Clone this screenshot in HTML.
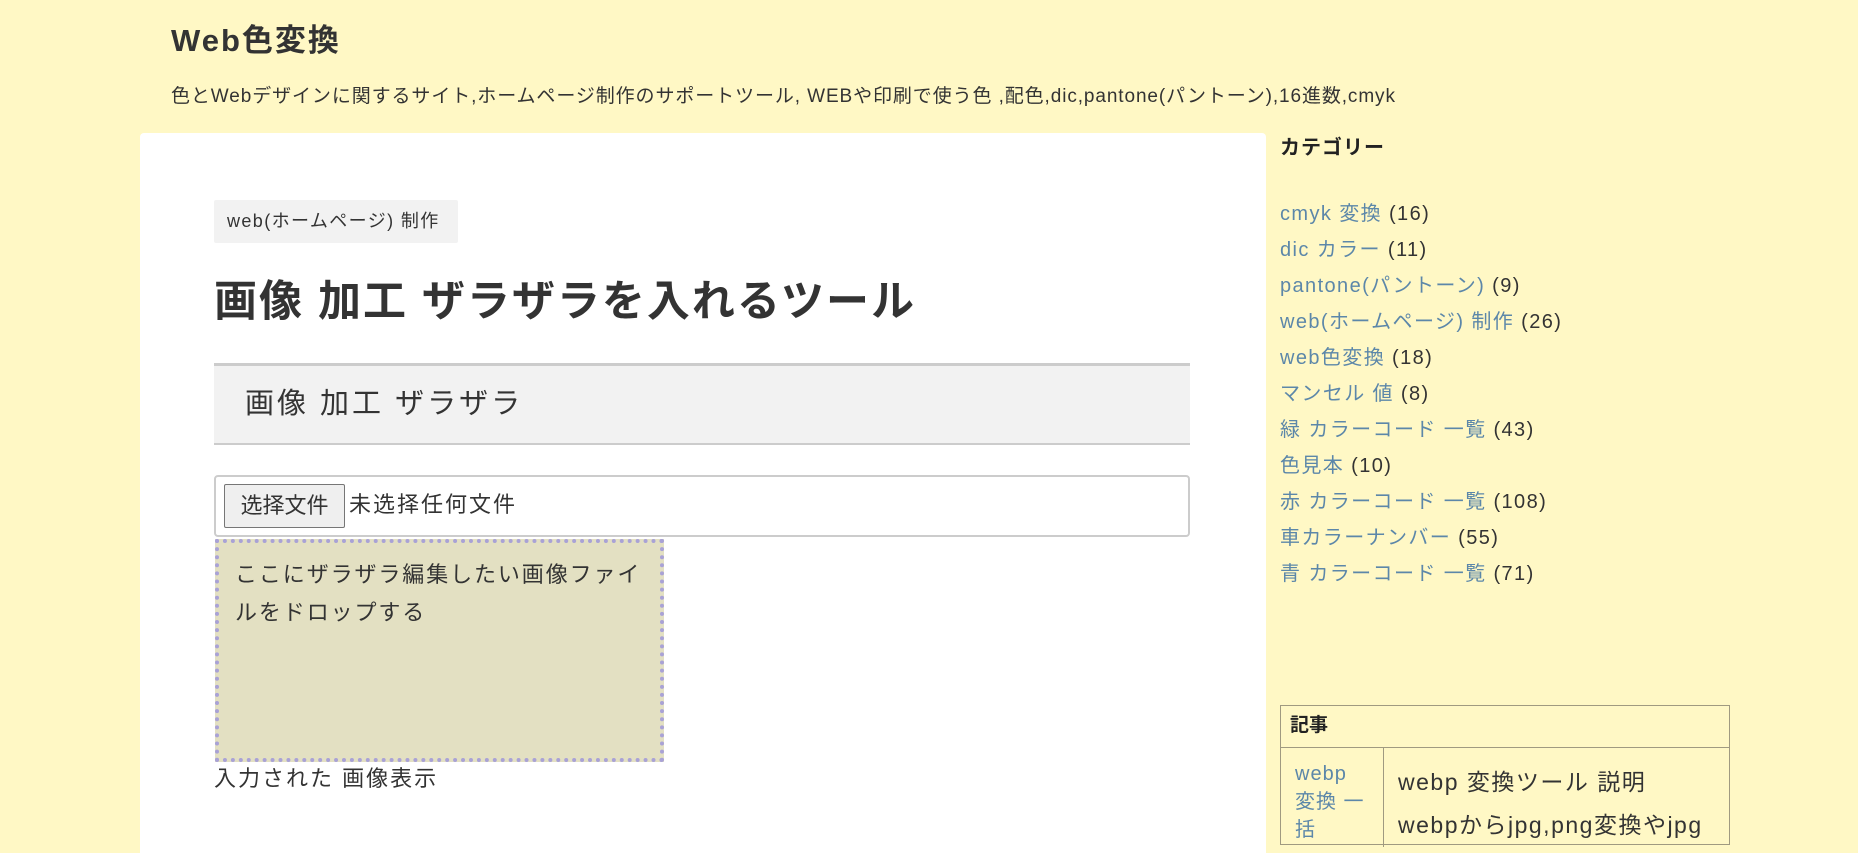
<!DOCTYPE html>
<html><head><meta charset="utf-8">
<style>
*{margin:0;padding:0;box-sizing:border-box}
body{width:1858px;height:837px;overflow:hidden;background:#fff8c5;font-family:"Liberation Sans","Noto Sans CJK JP",sans-serif;color:#333;position:relative}
.a{position:absolute;white-space:nowrap}
#main{position:absolute;left:140px;top:133px;width:1126px;height:720px;background:#fff;border-radius:4px 4px 0 0}
.cat a{color:#5c87a9;text-decoration:none}
</style></head><body>
<div class="a" style="left:171px;top:20px;font-size:31px;font-weight:bold;line-height:42px;letter-spacing:2px">Web色変換</div>
<div class="a" style="left:171px;top:85px;font-size:19px;line-height:24px;letter-spacing:0.9px">色とWebデザインに関するサイト,ホームページ制作のサポートツール, WEBや印刷で使う色 ,配色,dic,pantone(パントーン),16進数,cmyk</div>
<div id="main"></div>
<div class="a" style="left:214px;top:200px;width:244px;height:43px;background:#f2f2f2;border-radius:2px;font-size:18px;line-height:43px;padding-left:13px;letter-spacing:1.4px">web(ホームページ) 制作</div>
<div class="a" style="left:214px;top:274px;font-size:43px;font-weight:bold;line-height:56px;letter-spacing:2px">画像 加工 ザラザラを入れるツール</div>
<div class="a" style="left:214px;top:363px;width:976px;height:82px;background:#f2f2f2;border-top:3px solid #ccc;border-bottom:2px solid #ccc;font-size:29px;line-height:77px;padding-left:31px;letter-spacing:3px">画像 加工 ザラザラ</div>
<div class="a" style="left:214px;top:475px;width:976px;height:62px;border:2px solid #ccc;border-radius:4px;background:#fff"></div>
<div class="a" style="left:224px;top:484px;width:121px;height:44px;background:#efefef;border:1px solid #767676;border-radius:2px;font-size:22px;line-height:42px;text-align:center">选择文件</div>
<div class="a" style="left:349px;top:484px;font-size:22px;line-height:42px;letter-spacing:2px">未选择任何文件</div>
<div class="a" style="left:215px;top:539px;width:449px;height:223px;background:#e3e0c2;border:4px dotted #a9a2d6"></div>
<div class="a" style="left:235px;top:556px;width:420px;white-space:normal;font-size:22px;line-height:38px;letter-spacing:1.9px">ここにザラザラ編集したい画像ファイルをドロップする</div>
<div class="a" style="left:214px;top:764px;font-size:22px;line-height:30px;letter-spacing:2px">入力された 画像表示</div>
<div class="a" style="left:1280px;top:135px;font-size:20px;font-weight:bold;line-height:26px;color:#222;letter-spacing:1px">カテゴリー</div>
<div class="a cat" style="left:1280px;top:196px;font-size:20px;line-height:36px;letter-spacing:1.4px">
<a>cmyk 変換</a> (16)<br><a>dic カラー</a> (11)<br><a>pantone(パントーン)</a> (9)<br><a>web(ホームページ) 制作</a> (26)<br><a>web色変換</a> (18)<br><a>マンセル 値</a> (8)<br><a>緑 カラーコード 一覧</a> (43)<br><a>色見本</a> (10)<br><a>赤 カラーコード 一覧</a> (108)<br><a>車カラーナンバー</a> (55)<br><a>青 カラーコード 一覧</a> (71)</div>
<div class="a" style="left:1280px;top:705px;width:450px;height:140px;border:1px solid #a09a80"></div>
<div class="a" style="left:1280px;top:747px;width:450px;height:1px;background:#a09a80"></div>
<div class="a" style="left:1383px;top:747px;width:1px;height:100px;background:#a09a80"></div>
<div class="a" style="left:1290px;top:712px;font-size:19px;font-weight:bold;line-height:28px;color:#222">記事</div>
<div class="a" style="left:1295px;top:760px;font-size:20px;line-height:28px;color:#5c87a9;letter-spacing:1px">webp<br>変換 一<br>括</div>
<div class="a" style="left:1398px;top:761px;font-size:23px;line-height:43px;letter-spacing:1.5px">webp 変換ツール 説明<br>webpからjpg,png変換やjpg</div>
</body></html>
